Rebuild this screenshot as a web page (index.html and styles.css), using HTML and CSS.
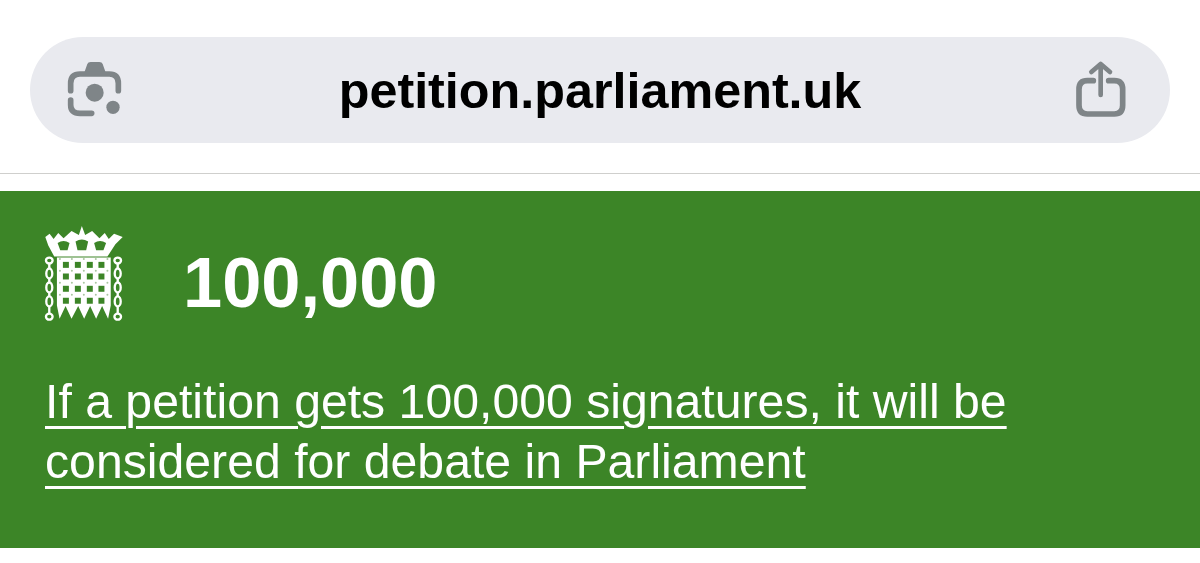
FILE: index.html
```html
<!DOCTYPE html>
<html lang="en">
<head>
  <meta charset="UTF-8" />
  <title>petition.parliament.uk</title>
  <link rel="stylesheet" href="styles.css">
</head>
<body>
  <header class="top">
    <div class="url-bar">
      <svg class="icon-lens" viewBox="0 0 270 240" aria-hidden="true">
        <path class="fill" d="M100 76L112 42Q114 36 122 36H148Q156 36 158 42L170 76Z"/>
        <path class="stroke" d="M62 122V100Q62 72 90 72H178Q205 72 205 100V122"/>
        <path class="stroke" d="M62 150V165Q62 190 90 190H125"/>
        <circle class="fill" cx="134" cy="128" r="27"/>
        <circle class="fill" cx="189" cy="172" r="20"/>
      </svg>
      <span class="url">petition.parliament.uk</span>
      <svg class="icon-share" viewBox="0 0 270 240" aria-hidden="true">
        <path class="stroke thin" d="M122 135V45M94 66L122 42L150 66"/>
        <path class="stroke" d="M100 92H82Q57 92 57 118V166Q57 192 82 192H163Q188 192 188 166V118Q188 92 163 92H146"/>
      </svg>
    </div>
  </header>

  <section class="panel">
    <div class="count-row">
      <svg class="portcullis" viewBox="42 30 236 295" aria-hidden="true">
        <path class="w" d="M45 66L58 56L70 72L84 54L100 70L124 48L146 60L155 33L165 60L186 48L208 70L224 54L236 72L252 56L278 66L256 88L232 125H72L54 92Z"/>
        <path class="g" d="M82 84Q100 72 118 84L112 106H90ZM136 80Q155 68 174 80L168 106H142ZM192 84Q210 72 228 84L220 106H198Z"/>
        <path class="w" d="M80 128H242V272L234 312L216 274L198 312L180 274L162 312L144 274L124 312L106 274L88 312L80 272Z"/>
        <g class="g">
          <rect x="98" y="141" width="18" height="18"/><rect x="134" y="141" width="18" height="18"/><rect x="170" y="141" width="18" height="18"/><rect x="205" y="141" width="18" height="18"/>
          <rect x="98" y="176" width="18" height="18"/><rect x="134" y="176" width="18" height="18"/><rect x="170" y="176" width="18" height="18"/><rect x="205" y="176" width="18" height="18"/>
          <rect x="98" y="213" width="18" height="18"/><rect x="134" y="213" width="18" height="18"/><rect x="170" y="213" width="18" height="18"/><rect x="205" y="213" width="18" height="18"/>
          <rect x="98" y="249" width="18" height="18"/><rect x="134" y="249" width="18" height="18"/><rect x="170" y="249" width="18" height="18"/><rect x="205" y="249" width="18" height="18"/>
        </g>
        <g class="rivets">
          <circle cx="89" cy="132" r="3"/><circle cx="125" cy="132" r="3"/><circle cx="161" cy="132" r="3"/><circle cx="197" cy="132" r="3"/><circle cx="232" cy="132" r="3"/>
          <circle cx="89" cy="168" r="3"/><circle cx="125" cy="168" r="3"/><circle cx="161" cy="168" r="3"/><circle cx="197" cy="168" r="3"/><circle cx="232" cy="168" r="3"/>
          <circle cx="89" cy="204" r="3"/><circle cx="125" cy="204" r="3"/><circle cx="161" cy="204" r="3"/><circle cx="197" cy="204" r="3"/><circle cx="232" cy="204" r="3"/>
          <circle cx="89" cy="240" r="3"/><circle cx="125" cy="240" r="3"/><circle cx="161" cy="240" r="3"/><circle cx="197" cy="240" r="3"/><circle cx="232" cy="240" r="3"/>
        </g>
        <g class="chain">
          <ellipse cx="57" cy="137" rx="10" ry="9"/><ellipse cx="57" cy="176" rx="9" ry="15"/><ellipse cx="57" cy="218" rx="9" ry="15"/><ellipse cx="57" cy="260" rx="9" ry="15"/><ellipse cx="57" cy="306" rx="10" ry="9"/>
          <path d="M57 146V161M57 191V203M57 233V245M57 275V297"/>
          <ellipse cx="263" cy="137" rx="10" ry="9"/><ellipse cx="263" cy="176" rx="9" ry="15"/><ellipse cx="263" cy="218" rx="9" ry="15"/><ellipse cx="263" cy="260" rx="9" ry="15"/><ellipse cx="263" cy="306" rx="10" ry="9"/>
          <path d="M263 146V161M263 191V203M263 233V245M263 275V297"/>
        </g>
      </svg>
      <h1 class="count">100,000</h1>
    </div>
    <p class="note"><a href="#">If a petition gets 100,000 signatures, it will be considered for debate in Parliament</a></p>
  </section>
</body>
</html>
```
FILE: styles.css
```css
body {
  margin: 0;
  background: #ffffff;
  font-family: "Liberation Sans", Arial, sans-serif;
}
.top {
  padding: 37px 30px 30px;
  border-bottom: 1px solid #cfcfcd;
}
.url-bar {
  display: flex;
  align-items: center;
  justify-content: space-between;
  height: 106px;
  padding: 0 20px;
  border-radius: 53px;
  background: #e9eaef;
}
.icon-lens,
.icon-share {
  width: 90px;
  height: 80px;
}
.stroke {
  fill: none;
  stroke: #7f8588;
  stroke-width: 17;
  stroke-linecap: round;
  stroke-linejoin: round;
}
.thin {
  stroke-width: 14;
}
.fill {
  fill: #7f8588;
}
.url {
  font-size: 50.3px;
  font-weight: bold;
  color: #000000;
}
.panel {
  margin-top: 17px;
  height: 323px;
  padding: 34px 45px 0 44px;
  background: #3c8527;
  color: #ffffff;
}
.count-row {
  display: flex;
  align-items: flex-start;
  gap: 60px;
}
.portcullis {
  width: 79px;
  height: 98px;
}
.w {
  fill: #ffffff;
}
.g {
  fill: #3c8527;
}
.rivets {
  fill: #a9c6a0;
}
.chain {
  fill: none;
  stroke: #ffffff;
  stroke-width: 7;
}
.count {
  margin: 9px 0 0;
  font-size: 70.4px;
  font-weight: bold;
  line-height: 98px;
}
.note {
  margin: 39px 0 0 1px;
  font-size: 48.2px;
  line-height: 60px;
}
.note a {
  color: #ffffff;
  text-decoration: underline;
  text-decoration-thickness: 3px;
  text-underline-offset: 8px;
}
```
